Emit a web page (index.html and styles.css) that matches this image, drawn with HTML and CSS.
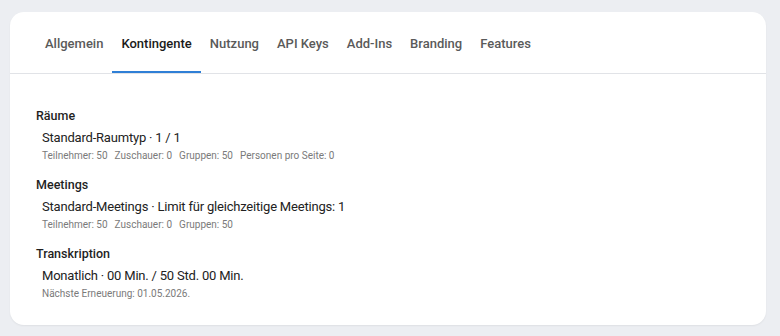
FILE: index.html
```html
<!DOCTYPE html>
<html lang="de">
<head>
    <meta charset="UTF-8">
    <meta name="viewport" content="width=device-width, initial-scale=1.0">
    <title>Kontingente</title>
    <link rel="stylesheet" href="styles.css">
</head>
<body>
    <div class="card">
        <nav class="tabs">
            <a class="tab">Allgemein</a>
            <a class="tab active">Kontingente</a>
            <a class="tab">Nutzung</a>
            <a class="tab">API Keys</a>
            <a class="tab">Add-Ins</a>
            <a class="tab">Branding</a>
            <a class="tab">Features</a>
        </nav>

        <div class="content">
            <section class="quota">
                <h3>Räume</h3>
                <div class="quota-main">Standard-Raumtyp · 1 / 1</div>
                <div class="quota-meta">
                    <span>Teilnehmer: 50</span>
                    <span>Zuschauer: 0</span>
                    <span>Gruppen: 50</span>
                    <span>Personen pro Seite: 0</span>
                </div>
            </section>

            <section class="quota">
                <h3>Meetings</h3>
                <div class="quota-main">Standard-Meetings · Limit für gleichzeitige Meetings: 1</div>
                <div class="quota-meta">
                    <span>Teilnehmer: 50</span>
                    <span>Zuschauer: 0</span>
                    <span>Gruppen: 50</span>
                </div>
            </section>

            <section class="quota">
                <h3>Transkription</h3>
                <div class="quota-main">Monatlich · 00 Min. / 50 Std. 00 Min.</div>
                <div class="quota-meta">
                    <span>Nächste Erneuerung: 01.05.2026.</span>
                </div>
            </section>
        </div>
    </div>
</body>
</html>
```

FILE: styles.css
```css
body {
    font-family: Roboto, "Noto Sans", sans-serif;
    margin: 0;
    padding: 12px 14px 13px 10px;
    background: #eceef2;
    color: #1f1f1f;
}

.card {
    background: #ffffff;
    border-radius: 14px;
    box-shadow: 0 1px 2px rgba(0, 0, 0, 0.06);
}

.tabs {
    display: flex;
    padding: 0 26px;
    border-bottom: 1px solid #e1e3e7;
}

.tab {
    padding: 23px 9px 18px;
    font-size: 13px;
    line-height: 18px;
    font-weight: 500;
    color: #5a5a5a;
    border-bottom: 2px solid transparent;
    cursor: pointer;
}

.tab.active {
    color: #1a1a1a;
    border-bottom-color: #2f7fd6;
}

.content {
    padding: 33px 26px 24px;
    display: flex;
    flex-direction: column;
    gap: 13px;
}

.quota h3 {
    margin: 0 0 4px;
    font-size: 12.5px;
    line-height: 18px;
    font-weight: 500;
    color: #1f1f1f;
}

.quota-main {
    padding-left: 6px;
    font-size: 13px;
    line-height: 18px;
    letter-spacing: -0.2px;
    color: #222;
}

.quota-meta {
    display: flex;
    gap: 7px;
    margin-top: 2px;
    padding-left: 6px;
    font-size: 10px;
    line-height: 14px;
    color: #7a7a7a;
}
```
